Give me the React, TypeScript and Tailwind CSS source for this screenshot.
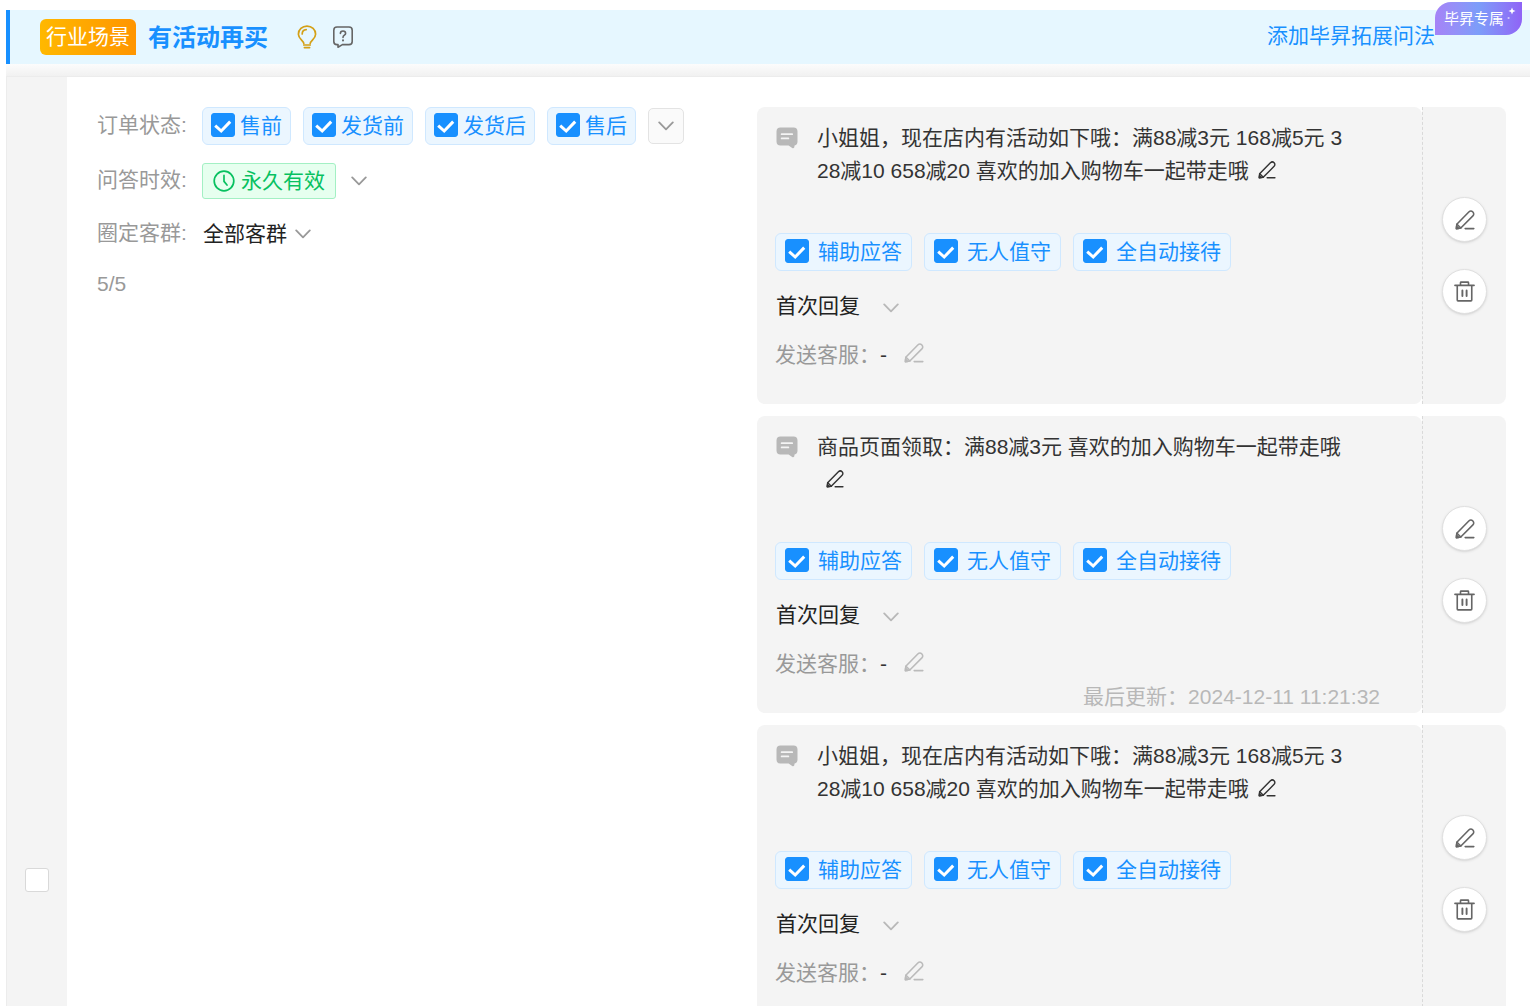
import { useState } from 'react';
import clsx from 'clsx';

interface Reply {
  id: number;
  text: string;
  updatedAt?: string;
}

const orderStates = ['售前', '发货前', '发货后', '售后'];
const replyModes = ['辅助应答', '无人值守', '全自动接待'];

const replies: Reply[] = [
  { id: 1, text: '小姐姐，现在店内有活动如下哦：满88减3元 168减5元 328减10 658减20 喜欢的加入购物车一起带走哦' },
  { id: 2, text: '商品页面领取：满88减3元 喜欢的加入购物车一起带走哦', updatedAt: '2024-12-11 11:21:32' },
  { id: 3, text: '小姐姐，现在店内有活动如下哦：满88减3元 168减5元 328减10 658减20 喜欢的加入购物车一起带走哦' },
];

function PencilIcon({ className }: { className?: string }) {
  return (
    <svg viewBox="0 0 20 20" fill="none" stroke="currentColor" strokeWidth="1.6" strokeLinejoin="round" strokeLinecap="round" className={className}>
      <path d="M1.4 18.6 L1.8 14.2 L13.8 2 C14.9 0.9 16.8 0.9 17.9 2 C19 3.1 19 4.8 17.9 5.9 L5.8 18 Z" />
      <path d="M2 14.2 L5.8 18" />
      <path d="M1.4 18.6 L1.6 16.4 L3.6 18.4 Z" fill="currentColor" />
      <path d="M10.2 18.6 H18.8" />
    </svg>
  );
}

function TrashIcon({ className }: { className?: string }) {
  return (
    <svg viewBox="0 0 22 22" fill="none" stroke="currentColor" strokeWidth="1.7" strokeLinejoin="round" strokeLinecap="round" className={className}>
      <path d="M1 4.6 H21" />
      <path d="M6.8 4.4 V1.9 Q6.8 1.2 7.5 1.2 H14.5 Q15.2 1.2 15.2 1.9 V4.4" />
      <path d="M3.4 5 V20 Q3.4 20.8 4.2 20.8 H17.8 Q18.6 20.8 18.6 20 V5" />
      <path d="M8.8 10 V15.8 M13.2 10 V15.8" strokeWidth="2" />
    </svg>
  );
}

function Chevron({ className }: { className?: string }) {
  return (
    <svg viewBox="0 0 16 10" fill="none" stroke="currentColor" strokeWidth="1.8" strokeLinecap="round" strokeLinejoin="round" className={clsx('w-4 h-[10px] shrink-0', className)}>
      <path d="M1.2 1.4 L8 8.4 L14.8 1.4" />
    </svg>
  );
}

function BubbleIcon() {
  return (
    <svg viewBox="0 0 22 22" className="w-[22px] h-[22px] shrink-0 mt-[6px] ml-[1px]">
      <path d="M4.5 0.5 H17.5 Q21.5 0.5 21.5 4.5 V14.5 Q21.5 18 18.6 18.4 L18.2 20.6 Q17.4 21.8 16.2 21 L12.6 18.5 H4.5 Q0.5 18.5 0.5 14.5 V4.5 Q0.5 0.5 4.5 0.5 Z" fill="#b8b8b8" />
      <path d="M5.6 7.2 H16.2 M5.6 11.4 H12.4" stroke="#f4f4f4" strokeWidth="1.7" strokeLinecap="round" />
    </svg>
  );
}

function CheckTag({ label, wide }: { label: string; wide?: boolean }) {
  const [checked, setChecked] = useState(true);

  return (
    <label
      className={clsx(
        'h-[38px] flex items-center rounded-md border border-[#cfe8ff] bg-[#ebf6ff] pb-[2px] text-[#1890ff] whitespace-nowrap cursor-pointer',
        wide ? 'px-[9px] gap-[9px]' : 'px-2 gap-[5px]'
      )}
    >
      <span className="relative w-6 h-6 shrink-0">
        <input
          type="checkbox"
          checked={checked}
          onChange={(e) => setChecked(e.target.checked)}
          className="block appearance-none w-6 h-6 rounded-[3px] border border-[#d0d0d0] bg-white checked:bg-[#1890ff] checked:border-[#1890ff]"
        />
        {checked && (
          <svg viewBox="0 0 24 24" fill="none" stroke="white" strokeWidth="3" className="absolute inset-0 w-6 h-6 pointer-events-none">
            <path d="M4.2 12.6 L10.2 18 L19.2 8.6" />
          </svg>
        )}
      </span>
      {label}
    </label>
  );
}

function ReplyCard({ reply }: { reply: Reply }) {
  return (
    <article className="flex shrink-0">
      <div className="flex-1 min-w-0 rounded-lg bg-[#f4f4f4] pt-[14px] pl-[18px]">
        <div className="flex min-h-[66px] pr-[70px]">
          <BubbleIcon />
          <p className="flex-1 ml-[19px] break-all leading-[33px] text-[#333]">
            {reply.text}
            <button aria-label="编辑内容" className="inline-block align-middle ml-[9px] mb-1">
              <PencilIcon className="w-[18px] h-[18px]" />
            </button>
          </p>
        </div>

        <div className="mt-[46px] flex gap-3">
          {replyModes.map((mode) => (
            <CheckTag key={mode} label={mode} wide />
          ))}
        </div>

        <label className="mt-[18px] flex w-fit items-center text-[#222]">
          <select aria-label="回复时机" className="appearance-none h-[33px] pl-[1px] bg-transparent">
            <option>首次回复</option>
          </select>
          <Chevron className="ml-[23px] mt-1 text-[#b8b8b8]" />
        </label>

        <div className="mt-4 flex h-[33px] items-center">
          <span className="text-[#999]">发送客服：</span>
          <span className="text-[#333]">-</span>
          <button aria-label="编辑发送客服" className="ml-[17px] mb-1 text-[#bbb]">
            <PencilIcon className="block w-5 h-5" />
          </button>
        </div>

        <div className="h-[33px] pr-[42px] text-right leading-[33px] text-[#b8b8b8]">
          {reply.updatedAt && <>最后更新：{reply.updatedAt}</>}
        </div>
      </div>

      {/* Card actions */}
      <div className="w-[84px] shrink-0 flex flex-col items-center justify-center gap-[27px] rounded-r-lg border-l border-dashed border-[#d9d9d9] bg-[#f4f4f4] text-[#666]">
        <button aria-label="编辑" className="w-[45px] h-[45px] flex items-center justify-center rounded-full border border-[#e0e0e0] bg-white shadow-sm">
          <PencilIcon className="w-5 h-5" />
        </button>
        <button aria-label="删除" className="w-[45px] h-[45px] flex items-center justify-center rounded-full border border-[#e0e0e0] bg-white shadow-sm">
          <TrashIcon className="w-[21px] h-[21px]" />
        </button>
      </div>
    </article>
  );
}

export default function App() {
  return (
    <div lang="zh-CN" className="h-screen overflow-hidden flex flex-col bg-white pt-[10px] pl-[6px] font-['Liberation_Sans','Noto_Sans_CJK_SC',sans-serif] text-[21px] leading-[33px]">
      {/* Scene header */}
      <header className="h-[54px] shrink-0 flex items-center border-l-4 border-[#1890ff] bg-[#e6f7ff] pl-[30px] pr-[95px]">
        <span className="h-9 px-[6px] rounded-md rounded-br-none bg-linear-to-r from-[#ffb800] to-[#ff9500] text-white leading-9">行业场景</span>
        <h1 className="ml-3 pt-[2px] text-2xl font-bold text-[#1890ff]">有活动再买</h1>
        <button aria-label="提示" className="ml-[29px]">
          <svg viewBox="0 0 20 24" fill="none" stroke="#d4a017" strokeWidth="1.7" strokeLinecap="round" className="block w-5 h-6">
            <path d="M6.8 18.6 C6.8 15.6 1.4 14 1.4 9.2 C1.4 4.6 5.2 1.2 10 1.2 C14.8 1.2 18.6 4.6 18.6 9.2 C18.6 14 13.2 15.6 13.2 18.6" />
            <path d="M5.2 9 C5.2 6.6 7 4.8 9.2 4.6" />
            <path d="M6.8 20 H13.2 M7.4 22.6 H12.6" />
          </svg>
        </button>
        <button aria-label="帮助" className="ml-4">
          <svg viewBox="0 0 20 22" fill="none" stroke="#666" strokeWidth="1.6" strokeLinecap="round" strokeLinejoin="round" className="block w-5 h-[22px]">
            <path d="M4 1 H16 Q19.2 1 19.2 4.2 V15.4 Q19.2 18.6 16 18.6 H9.4 L5 21.2 V18.6 H4 Q0.8 18.6 0.8 15.4 V4.2 Q0.8 1 4 1 Z" />
            <path d="M7.4 7.4 C7.4 4.2 12.6 4.2 12.6 7.4 C12.6 9.2 10 9.2 10 11.4" />
            <path d="M10 14.2 V14.4" strokeWidth="2" />
          </svg>
        </button>

        <a href="#extend" className="relative ml-auto pb-[3px] text-[#1890ff]">
          添加毕昇拓展问法
          <span className="absolute left-full bottom-full -mb-4 w-[87px] h-[33px] pl-[9px] rounded-tl-2xl rounded-br-2xl bg-linear-to-r from-[#a583f7] via-[#7c9df9] to-[#8f63f6] text-[15px] leading-[33px] text-white whitespace-nowrap">
            毕昇专属
            <svg viewBox="0 0 10 14" fill="white" className="absolute right-[6px] top-[5px] w-[10px] h-[14px]">
              <path d="M6 0.5 L7 3 L9.5 4 L7 5 L6 7.5 L5 5 L2.5 4 L5 3 Z" />
              <circle cx="2.6" cy="11" r="1.1" opacity="0.6" />
            </svg>
          </span>
        </a>
      </header>

      <div className="h-3 shrink-0 bg-linear-to-b from-[#fcfcfc] to-[#f1f1f1]" />

      <div className="flex-1 min-h-0 flex border-t border-l border-[#ececec]">
        {/* Row selection */}
        <div className="w-[60px] shrink-0 flex items-end justify-center bg-[#f4f4f4] pb-[114px]">
          <input type="checkbox" aria-label="选择该场景" className="appearance-none w-6 h-6 rounded-[3px] border border-[#d9d9d9] bg-white checked:bg-[#1890ff]" />
        </div>

        <main className="flex-1 min-w-0 grid grid-cols-[660fr_749fr] pt-[30px] pl-[30px] pr-6">
          <section className="flex flex-col gap-[18px]">
            <div className="flex items-center">
              <span className="w-[105px] shrink-0 pb-[3px] text-[#999]">订单状态:</span>
              <div className="flex items-center gap-3">
                {orderStates.map((state) => (
                  <CheckTag key={state} label={state} />
                ))}
                <button aria-label="更多状态" className="w-9 h-9 flex items-center justify-center rounded-[5px] border border-[#e3e3e3] bg-[#fafafa] text-[#999]">
                  <Chevron />
                </button>
              </div>
            </div>

            <label className="flex items-center text-[#999]">
              <span className="w-[105px] shrink-0 pb-[3px]">问答时效:</span>
              <span className="relative flex items-center">
                <svg viewBox="0 0 22 22" fill="none" stroke="#07c160" strokeWidth="1.7" strokeLinecap="round" strokeLinejoin="round" className="absolute left-[11px] w-[22px] h-[22px] pointer-events-none">
                  <circle cx="11" cy="11" r="9.8" />
                  <path d="M11 5.4 V11.4 L14 15" />
                </svg>
                <select className="appearance-none h-9 pl-[38px] pr-[10px] pb-[3px] rounded-[3px] border border-[#a3f0c4] bg-[#e6ffef] text-[#07c160]">
                  <option>永久有效</option>
                </select>
              </span>
              <Chevron className="ml-[15px]" />
            </label>

            <label className="flex h-[33px] items-center text-[#999]">
              <span className="w-[105px] shrink-0 pb-[3px]">圈定客群:</span>
              <select className="appearance-none h-[33px] pl-[1px] pb-[2px] bg-transparent text-[#222]">
                <option>全部客群</option>
              </select>
              <Chevron className="ml-2" />
            </label>

            <p className="-mt-[1px] text-[#999]">5/5</p>
          </section>

          <section className="flex flex-col gap-3 min-h-0">
            {replies.map((reply) => (
              <ReplyCard key={reply.id} reply={reply} />
            ))}
          </section>
        </main>
      </div>
    </div>
  );
}
